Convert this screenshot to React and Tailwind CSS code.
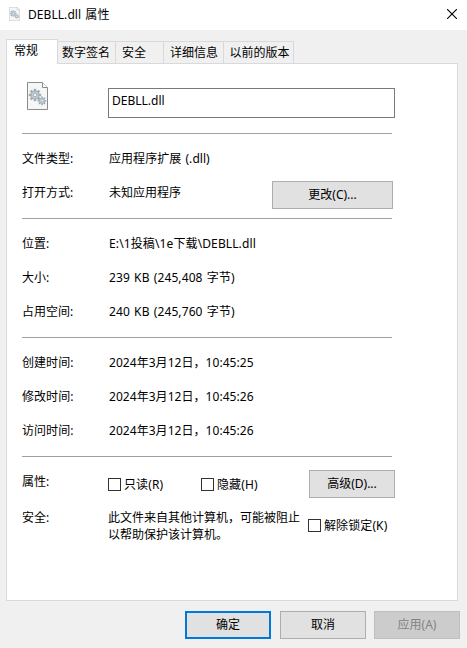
import { useState } from 'react';
import clsx from 'clsx';

const TABS = [
    { label: '常规', width: 'w-[52px]' },
    { label: '数字签名', width: 'w-[58px]' },
    { label: '安全', width: 'w-[48px]' },
    { label: '详细信息', width: 'w-[60px]' },
    { label: '以前的版本', width: 'w-[70px]' },
];

const TAB_PADDING = ['pl-[7px]', 'pl-[4px]', 'pl-[6px]', 'pl-[6px]', 'pl-[5.5px]'];

function Gear({ cx, cy, r, teeth }) {
    const items = Array.from({ length: teeth }, (_, i) => (i * 360) / teeth);
    return (
        <g>
            {items.map((angle) => (
                <rect
                    key={angle}
                    x={cx - r * 0.2}
                    y={cy - r}
                    width={r * 0.4}
                    height={r * 0.4}
                    fill="#9eabb3"
                    transform={`rotate(${angle} ${cx} ${cy})`}
                />
            ))}
            <circle cx={cx} cy={cy} r={r * 0.62} fill="#c6d2da" stroke="#a3b1ba" strokeWidth={r * 0.2} />
            <circle cx={cx} cy={cy} r={r * 0.3} fill="#f7f8f9" stroke="#94a3ad" strokeWidth={r * 0.14} />
        </g>
    );
}

function FileIcon({ className, stroke = '#8b8b8b' }) {
    return (
        <svg viewBox="0 0 21 28" preserveAspectRatio="none" className={className}>
            <path d="M.5.5h15l5 5v22H.5z" fill="#f5f6f6" stroke={stroke} />
            <path d="M15.5.5v5h5" fill="#fff" stroke={stroke} />
            <Gear cx={8} cy={13} r={6.2} teeth={8} />
            <Gear cx={15} cy={18.8} r={4.3} teeth={8} />
        </svg>
    );
}

function Button({ children, className }) {
    return (
        <button className={clsx('flex h-[28px] shrink-0 items-center justify-center pb-px', className)}>
            {children}
        </button>
    );
}

function Row({ label, children }) {
    return (
        <div className="flex h-[34px] items-center pb-[2px]">
            <span className="w-[87px] shrink-0">{label}</span>
            {children}
        </div>
    );
}

function CheckBox({ label, className }) {
    const [checked, setChecked] = useState(false);
    return (
        <label className={clsx('flex h-[13px] items-center gap-[3px] whitespace-nowrap', className)}>
            <input
                type="checkbox"
                checked={checked}
                onChange={() => setChecked(!checked)}
                className="size-[13px] appearance-none border border-[#333] bg-white checked:bg-[#333]"
            />
            <span className="mt-[-1px] tracking-[0.1px]">{label}</span>
        </label>
    );
}

function Divider() {
    return <div className="h-px w-[370px] bg-[#a0a0a0]" />;
}

export default function App() {
    const [active, setActive] = useState(0);

    return (
        <div className="flex h-[648px] w-[467px] flex-col overflow-hidden bg-[#f0f0f0] font-['Noto_Sans','Noto_Sans_CJK_SC',sans-serif] text-[12px] leading-[17px] text-black">
            {/* Title bar */}
            <div className="flex h-[30px] shrink-0 items-center bg-white pr-[10px] pl-[9px]">
                <FileIcon className="mt-[-2px] h-[14px] w-[11px]" stroke="#b5b5b5" />
                <span className="mt-[-2px] ml-2 [word-spacing:1px] tracking-[0.06px]">DEBLL.dll 属性</span>
                <svg viewBox="0 0 10 10" className="ml-auto mt-[-2px] size-[10px]" stroke="#000" strokeWidth="1.1">
                    <path d="M0 0l10 10M10 0L0 10" />
                </svg>
            </div>

            {/* Tabs */}
            <div className="z-10 flex h-[34px] shrink-0 items-end pl-[6px]">
                {TABS.map((tab, i) => (
                    <button
                        key={tab.label}
                        onClick={() => setActive(i)}
                        className={clsx(
                            'flex items-center whitespace-nowrap border-t border-r border-[#d9d9d9]',
                            tab.width,
                            TAB_PADDING[i],
                            active === i ? 'h-[25px] border-l bg-white pb-[3px]' : 'mb-px h-[22px]'
                        )}
                    >
                        {tab.label}
                    </button>
                ))}
            </div>

            <div className="mt-[-1px] ml-[6px] h-[538px] w-[452px] shrink-0 border border-[#d9d9d9] bg-white pl-[15px]">
                <div className="flex h-[69px] pl-[5px]">
                    <FileIcon className="mt-[18px] h-[28px] w-[21px]" />
                    <input
                        defaultValue="DEBLL.dll"
                        className="mt-[24px] ml-[60px] h-[30px] w-[287px] border border-[#7a7a7a] pb-[6px] pl-[3px] outline-none"
                    />
                </div>
                <Divider />

                <div className="py-2">
                    <Row label="文件类型:">
                        <span className="[word-spacing:1px] tracking-[0.05px]">应用程序扩展 (.dll)</span>
                    </Row>
                    <Row label="打开方式:">
                        <span className="w-[163px]">未知应用程序</span>
                        <Button className="mt-[6px] w-[121px] border border-[#adadad] bg-[#e1e1e1]">更改(C)...</Button>
                    </Row>
                </div>
                <Divider />

                <div className="py-2">
                    <Row label="位置:">
                        <span className="tracking-[0.12px]">E:\1投稿\1e下载\DEBLL.dll</span>
                    </Row>
                    <Row label="大小:">
                        <span className="[word-spacing:1px] tracking-[0.1px]">239 KB (245,408 字节)</span>
                    </Row>
                    <Row label="占用空间:">
                        <span className="[word-spacing:1px] tracking-[0.1px]">240 KB (245,760 字节)</span>
                    </Row>
                </div>
                <Divider />

                <div className="py-2 tracking-[0.05px]">
                    <Row label="创建时间:">2024年3月12日，10:45:25</Row>
                    <Row label="修改时间:">2024年3月12日，10:45:26</Row>
                    <Row label="访问时间:">2024年3月12日，10:45:26</Row>
                </div>
                <Divider />

                <div className="flex h-[52px] items-start">
                    <span className="mt-[16px] w-[86px]">属性:</span>
                    <CheckBox label="只读(R)" className="mt-[21px] w-[93px]" />
                    <CheckBox label="隐藏(H)" className="mt-[21px] w-[108px]" />
                    <Button className="mt-[13px] w-[86px] border border-[#adadad] bg-[#e1e1e1]">高级(D)...</Button>
                </div>
                <div className="flex items-start">
                    <span className="w-[86px]">安全:</span>
                    <p className="w-[200px] whitespace-nowrap">
                        此文件来自其他计算机，可能被阻止
                        <br />
                        以帮助保护该计算机。
                    </p>
                    <CheckBox label="解除锁定(K)" className="mt-[10px]" />
                </div>
            </div>

            {/* Dialog buttons */}
            <div className="flex pt-[10px] pl-[185px]">
                <Button className="w-[86px] border-2 border-[#0078d7] bg-[#e1e1e1]">确定</Button>
                <Button className="ml-[9px] w-[86px] border border-[#adadad] bg-[#e1e1e1]">取消</Button>
                <Button className="ml-[8px] w-[86px] border border-[#bfbfbf] bg-[#cccccc] text-[#838383]">应用(A)</Button>
            </div>
        </div>
    );
}
